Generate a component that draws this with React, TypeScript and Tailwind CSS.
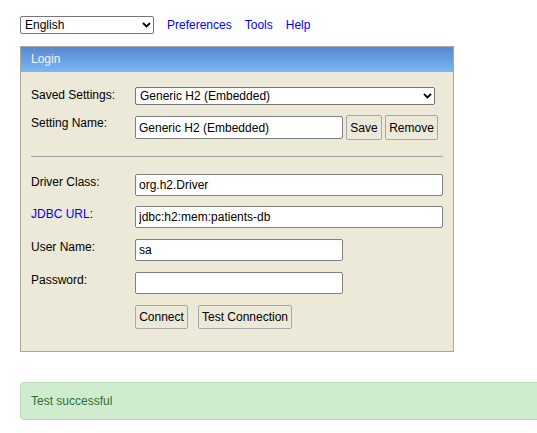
import React from "react";

function Chevron() {
  return (
    <svg
      className="pointer-events-none absolute right-[3px] top-1/2 -translate-y-1/2"
      width="9"
      height="6"
      viewBox="0 0 9 6"
    >
      <path d="M1 1 L4.5 4.5 L8 1" fill="none" stroke="#000" strokeWidth="1.8" />
    </svg>
  );
}

function Select({ value, w }: { value: string; w: string }) {
  return (
    <div className={`relative h-[18px] ${w}`}>
      <select
        defaultValue={value}
        className="h-full w-full appearance-none rounded-[2px] border border-[#767676] bg-white pl-[4px] text-[12px] leading-[16px] text-black outline-none"
      >
        <option>{value}</option>
      </select>
      <Chevron />
    </div>
  );
}

function Btn({ label, w, h }: { label: string; w: string; h: string }) {
  return (
    <button
      className={`${w} ${h} shrink-0 rounded-[2px] border border-[#a8a8a8] bg-[#ece9d8] text-center text-[12px] text-black`}
    >
      {label}
    </button>
  );
}

function Input({ value, w }: { value: string; w: string }) {
  return (
    <input
      defaultValue={value}
      className={`${w} h-[22px] rounded-[2px] border border-[#808080] bg-white pl-[3px] text-[12px] text-black outline-none`}
    />
  );
}

export default function App() {
  return (
    <div
      className="h-[433px] w-[537px] overflow-hidden bg-white pl-[20px] pt-[16px] text-[12px] text-black"
      style={{ fontFamily: '"Liberation Sans", Arial, sans-serif' }}
    >
      <div className="flex h-[18px] items-center gap-[13px]">
        <Select value="English" w="w-[134px]" />
        <a className="text-[#0000ff]">Preferences</a>
        <a className="text-[#0000ff]">Tools</a>
        <a className="text-[#0000ff]">Help</a>
      </div>

      <div className="mt-[12px] w-[434px] border border-[#aca899] bg-[#ece9d8]">
        <div className="flex h-[25px] items-center bg-gradient-to-b from-[#5787d2] to-[#7cb7f5] pb-[2px] pl-[10px] text-[#f4f4f4]">
          Login
        </div>
        <div className="px-[10px] pb-[22px] pt-[15px]">
          <div className="flex items-start">
            <div className="w-[104px] leading-[16px]">Saved Settings:</div>
            <Select value="Generic H2 (Embedded)" w="w-[300px]" />
          </div>

          <div className="mt-[10px] flex items-start">
            <div className="w-[104px] leading-[16px]">Setting Name:</div>
            <div className="flex items-center gap-[3px]">
              <input
                defaultValue="Generic H2 (Embedded)"
                className="h-[23px] w-[208px] rounded-[2px] border border-[#808080] bg-white pl-[3px] text-[12px] text-black outline-none"
              />
              <Btn label="Save" w="w-[36px]" h="h-[25px]" />
              <Btn label="Remove" w="w-[53px]" h="h-[25px]" />
            </div>
          </div>

          <div className="mt-[16px] h-px w-[412px] bg-[#a3a3a3]" />

          <div className="mt-[17px] flex items-start">
            <div className="w-[104px] leading-[16px]">Driver Class:</div>
            <Input value="org.h2.Driver" w="w-[308px]" />
          </div>

          <div className="mt-[10px] flex items-start">
            <div className="w-[104px] leading-[16px]">
              <a className="text-[#0000ff]">JDBC URL</a>:
            </div>
            <Input value="jdbc:h2:mem:patients-db" w="w-[308px]" />
          </div>

          <div className="mt-[11px] flex items-start">
            <div className="w-[104px] leading-[16px]">User Name:</div>
            <Input value="sa" w="w-[208px]" />
          </div>

          <div className="mt-[11px] flex items-start">
            <div className="w-[104px] leading-[16px]">Password:</div>
            <input
              type="password"
              className="h-[22px] w-[208px] rounded-[2px] border border-[#808080] bg-white pl-[3px] text-[12px] text-black outline-none"
            />
          </div>

          <div className="mt-[11px] flex items-start pl-[104px]">
            <div className="flex gap-[10px]">
              <Btn label="Connect" w="w-[53px]" h="h-[24px]" />
              <Btn label="Test Connection" w="w-[94px]" h="h-[24px]" />
            </div>
          </div>
        </div>
      </div>

      <div className="mt-[30px] flex h-[38px] w-[540px] items-center rounded-[4px] border border-[#b7dcb7] bg-[#cfeccf] pl-[10px] text-[#2f6f2f]">
        Test successful
      </div>
    </div>
  );
}
